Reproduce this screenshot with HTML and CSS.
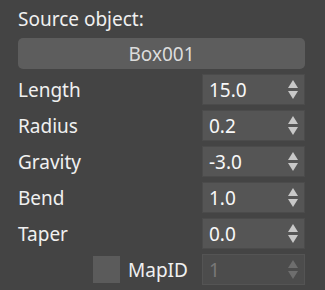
FILE: index.html
```html
<!DOCTYPE html>
<html lang="en">
<head>
    <meta charset="UTF-8">
    <title>Source object</title>
    <link rel="stylesheet" href="styles.css">
</head>
<body>
    <div class="panel">
        <div class="title">Source object:</div>
        <button class="pick">Box001</button>

        <div class="row">
            <span class="label">Length</span>
            <div class="spinner"><span class="value">15.0</span><span class="arrows"><i class="up"></i><i class="down"></i></span></div>
        </div>
        <div class="row">
            <span class="label">Radius</span>
            <div class="spinner"><span class="value">0.2</span><span class="arrows"><i class="up"></i><i class="down"></i></span></div>
        </div>
        <div class="row">
            <span class="label">Gravity</span>
            <div class="spinner"><span class="value">-3.0</span><span class="arrows"><i class="up"></i><i class="down"></i></span></div>
        </div>
        <div class="row">
            <span class="label">Bend</span>
            <div class="spinner"><span class="value">1.0</span><span class="arrows"><i class="up"></i><i class="down"></i></span></div>
        </div>
        <div class="row">
            <span class="label">Taper</span>
            <div class="spinner"><span class="value">0.0</span><span class="arrows"><i class="up"></i><i class="down"></i></span></div>
        </div>
        <div class="row map-row">
            <span class="check"></span>
            <span class="label">MapID</span>
            <div class="spinner disabled"><span class="value">1</span><span class="arrows"><i class="up"></i><i class="down"></i></span></div>
        </div>
    </div>
</body>
</html>
```

FILE: styles.css
```css
/* page */
body {
    margin: 0;
    background: #444444;
    font-family: "Noto Sans", "Open Sans", sans-serif;
    font-size: 19px;
    color: #f0f0f0;
}

.panel {
    padding: 0 20px 0 18px;
}

/* heading + object button */
.title {
    height: 38px;
    line-height: 38px;
}

.pick {
    display: block;
    width: 100%;
    height: 31px;
    margin: 0;
    padding: 0;
    border: none;
    border-radius: 5px;
    background: #5d5d5d;
    color: #dcdcdc;
    font-family: inherit;
    font-size: 19px;
}

/* parameter rows */
.row {
    display: flex;
    align-items: center;
    height: 31px;
    margin-top: 5px;
}

.label {
    flex: 1;
}

.spinner {
    display: flex;
    align-items: center;
    width: 103px;
    height: 31px;
    box-sizing: border-box;
    border: 1px solid #4b4b4b;
    background: #555555;
    color: #f8f8f8;
}

.value {
    flex: 1;
    padding-left: 6px;
}

.arrows {
    display: flex;
    flex-direction: column;
    gap: 3px;
    margin-right: 6px;
}

.arrows i {
    display: block;
    width: 0;
    height: 0;
    border-left: 5.5px solid transparent;
    border-right: 5.5px solid transparent;
}

.arrows .up {
    border-bottom: 8px solid #c8c8c8;
}

.arrows .down {
    border-top: 8px solid #c8c8c8;
}

/* MapID row */
.map-row {
    padding-left: 75px;
}

.check {
    width: 27px;
    height: 27px;
    background: #5b5b5b;
    margin-right: 8px;
}

.spinner.disabled {
    background: #4c4c4c;
    border-color: #545454;
    color: #787878;
}

.spinner.disabled .up {
    border-bottom-color: #6e6e6e;
}

.spinner.disabled .down {
    border-top-color: #6e6e6e;
}
```
